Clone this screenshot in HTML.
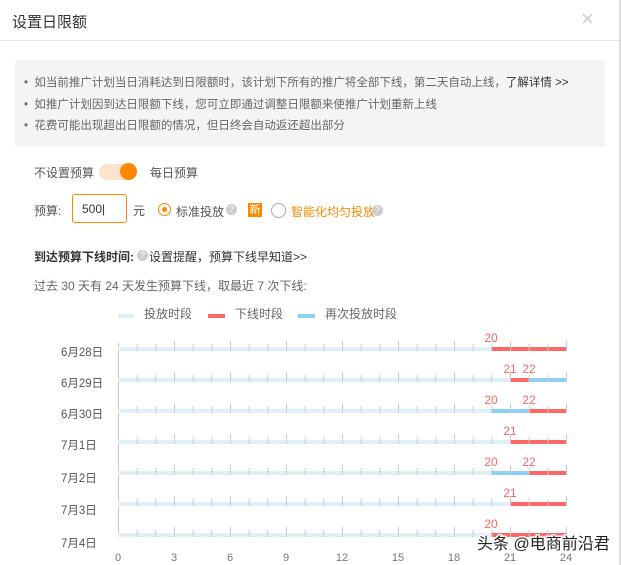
<!DOCTYPE html>
<html><head><meta charset="utf-8"><style>
body{margin:0;width:621px;height:565px;background:#fff;font-family:"Liberation Sans","Noto Sans CJK SC",sans-serif;color:#333;position:relative;overflow:hidden}
.a{position:absolute;white-space:nowrap}
</style></head><body>
<div class="a" style="left:12px;top:11px;font-size:15px;color:#333">设置日限额</div>
<div class="a" style="left:581px;top:6px;font-size:22px;color:#ccc;font-weight:300">×</div>
<div class="a" style="left:0;top:40px;width:621px;height:1px;background:#e5e5e5"></div>
<div class="a" style="left:619px;top:0;width:2px;height:565px;background:#ddd"></div>
<div class="a" style="left:15px;top:60px;width:590px;height:87px;background:#f4f4f4"></div>
<div class="a" style="left:24px;top:73px;font-size:11.5px;color:#666;line-height:21.5px">
• &nbsp;如当前推广计划当日消耗达到日限额时，该计划下所有的推广将全部下线，第二天自动上线，<span style="color:#333">了解详情 &gt;&gt;</span><br>
• &nbsp;如推广计划因到达日限额下线，您可立即通过调整日限额来使推广计划重新上线<br>
• &nbsp;花费可能出现超出日限额的情况，但日终会自动返还超出部分</div>
<div class="a" style="left:34px;top:164px;font-size:12px;color:#555">不设置预算</div>
<div class="a" style="left:99px;top:164px;width:38px;height:16px;border-radius:8px;background:#fde3cc"></div>
<div class="a" style="left:120px;top:163px;width:17px;height:17px;border-radius:50%;background:#f80"></div>
<div class="a" style="left:150px;top:164px;font-size:12px;color:#555">每日预算</div>
<div class="a" style="left:34px;top:202px;font-size:12px;color:#555">预算:</div>
<div class="a" style="left:72px;top:194px;width:55px;height:29px;border:1px solid #f80;border-radius:3px;font-size:12px;line-height:29px;box-sizing:border-box;padding-left:9px;color:#333">500|</div>
<div class="a" style="left:133px;top:202px;font-size:12px;color:#555">元</div>
<div class="a" style="left:158px;top:203px;width:11px;height:11px;border:1px solid #f80;border-radius:50%"></div>
<div class="a" style="left:162px;top:207px;width:5px;height:5px;border-radius:50%;background:#f80"></div>
<div class="a" style="left:176px;top:203px;font-size:12px;color:#555">标准投放</div>
<div class="a" style="left:226px;top:204px;width:11px;height:11px;border-radius:50%;background:#ccc;color:#fff;font-size:9px;text-align:center;line-height:11px">?</div>
<div class="a" style="left:248px;top:203px;width:14px;height:14px;background:#f80;color:#fff;font-size:11px;text-align:center;line-height:14px">新</div>
<div class="a" style="left:271px;top:203px;width:13px;height:13px;border:1px solid #aaa;border-radius:50%"></div>
<div class="a" style="left:291px;top:203px;font-size:12px;color:#f80">智能化均匀投放</div>
<div class="a" style="left:372px;top:205px;width:11px;height:11px;border-radius:50%;background:#ccc;color:#fff;font-size:9px;text-align:center;line-height:11px">?</div>
<div class="a" style="left:34px;top:248px;font-size:12px;color:#333;font-weight:bold">到达预算下线时间:</div>
<div class="a" style="left:137px;top:250px;width:11px;height:11px;border-radius:50%;background:#ccc;color:#fff;font-size:9px;text-align:center;line-height:11px">?</div>
<div class="a" style="left:149px;top:248px;font-size:12px;color:#333">设置提醒，预算下线早知道&gt;&gt;</div>
<div class="a" style="left:34px;top:277px;font-size:12px;color:#666">过去 30 天有 24 天发生预算下线，取最近 7 次下线:</div>
<svg class="a" style="left:0;top:0" width="621" height="565" font-family="Liberation Sans, Noto Sans CJK SC, sans-serif">
<defs>
<path id="tk" fill="none" stroke="#ccc" stroke-width="1" d="M137.2 -3V4M155.8 -3V4M174.5 -6V4M193.2 -3V4M211.8 -3V4M230.5 -6V4M249.2 -3V4M267.8 -3V4M286.5 -6V4M305.2 -3V4M323.8 -3V4M342.5 -6V4M361.2 -3V4M379.8 -3V4M398.5 -6V4M417.2 -3V4M435.8 -3V4M454.5 -6V4M473.2 -3V4M491.8 -3V4M510.5 -6V4M529.2 -3V4M547.8 -3V4M566.5 -6V4"/>
</defs>
<g font-size="12" fill="#666">
<rect x="118" y="314" width="16" height="4" fill="#dff0fb"/><text x="144" y="318">投放时段</text>
<rect x="208" y="314" width="17" height="4" fill="#f66"/><text x="235" y="318">下线时段</text>
<rect x="298" y="314" width="17" height="4" fill="#8ecff5"/><text x="325" y="318">再次投放时段</text>
</g>
<line x1="118.5" y1="343" x2="118.5" y2="537" stroke="#ccc"/>
<g>
<!-- row1 -->
<rect x="118" y="347" width="373.3" height="4" fill="#dff0fb"/><rect x="491.3" y="347" width="74.7" height="4" fill="#f66"/>
<!-- row2 -->
<rect x="118" y="378" width="392" height="4" fill="#dff0fb"/><rect x="510" y="378" width="18.7" height="4" fill="#f66"/><rect x="528.7" y="378" width="37.3" height="4" fill="#8ecff5"/>
<!-- row3 -->
<rect x="118" y="409" width="373.3" height="4" fill="#dff0fb"/><rect x="491.3" y="409" width="37.4" height="4" fill="#8ecff5"/><rect x="528.7" y="409" width="37.3" height="4" fill="#f66"/>
<!-- row4 -->
<rect x="118" y="440" width="392" height="4" fill="#dff0fb"/><rect x="510" y="440" width="56" height="4" fill="#f66"/>
<!-- row5 -->
<rect x="118" y="471" width="373.3" height="4" fill="#dff0fb"/><rect x="491.3" y="471" width="37.4" height="4" fill="#8ecff5"/><rect x="528.7" y="471" width="37.3" height="4" fill="#f66"/>
<!-- row6 -->
<rect x="118" y="502" width="392" height="4" fill="#dff0fb"/><rect x="510" y="502" width="56" height="4" fill="#f66"/>
<!-- row7 -->
<rect x="118" y="533" width="373.3" height="4" fill="#dff0fb"/><rect x="491.3" y="533" width="74.7" height="4" fill="#f66"/>
</g>
<use href="#tk" y="347"/><use href="#tk" y="378"/><use href="#tk" y="409"/><use href="#tk" y="440"/><use href="#tk" y="471"/><use href="#tk" y="502"/><use href="#tk" y="533"/>
<g font-size="12" fill="#f66" text-anchor="middle">
<text x="491" y="342">20</text>
<text x="510" y="373">21</text><text x="529" y="373">22</text>
<text x="491" y="404">20</text><text x="529" y="404">22</text>
<text x="510" y="435">21</text>
<text x="491" y="466">20</text><text x="529" y="466">22</text>
<text x="510" y="497">21</text>
<text x="491" y="528">20</text>
</g>
<g font-size="11.5" fill="#555">
<text x="61" y="356">6月28日</text><text x="61" y="387">6月29日</text><text x="61" y="418">6月30日</text><text x="61" y="449">7月1日</text><text x="61" y="482">7月2日</text><text x="61" y="514">7月3日</text><text x="61" y="547">7月4日</text>
</g>
<g font-size="11" fill="#777" text-anchor="middle">
<text x="118" y="561">0</text><text x="174" y="561">3</text><text x="230" y="561">6</text><text x="286" y="561">9</text><text x="342" y="561">12</text><text x="398" y="561">15</text><text x="454" y="561">18</text><text x="510" y="561">21</text><text x="566" y="561">24</text>
</g>
<text x="477" y="549" font-size="16" fill="#222" stroke="#fff" stroke-width="3" paint-order="stroke">头条 @电商前沿君</text>
</svg>
</body></html>
